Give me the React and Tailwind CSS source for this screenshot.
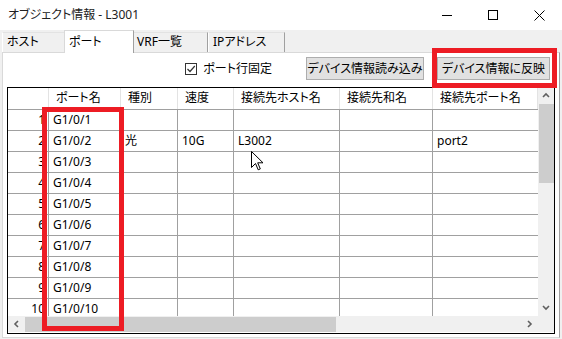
import React from "react";

const columns = [
  { key: "portName", label: "ポート名", w: "w-[72px]" },
  { key: "kind", label: "種別", w: "w-[57px]" },
  { key: "speed", label: "速度", w: "w-[56px]" },
  { key: "host", label: "接続先ホスト名", w: "w-[106px]" },
  { key: "alias", label: "接続先和名", w: "w-[93px]" },
  { key: "peerPort", label: "接続先ポート名", w: "flex-1" },
];

const rows = Array.from({ length: 10 }, (_, i) => ({
  no: i + 1,
  portName: `G1/0/${i + 1}`,
  kind: i === 1 ? "光" : "",
  speed: i === 1 ? "10G" : "",
  host: i === 1 ? "L3002" : "",
  alias: "",
  peerPort: i === 1 ? "port2" : "",
}));

const tabs = ["ホスト", "ポート", "VRF一覧", "IPアドレス"];

const WindowControls = () => (
  <div className="flex items-center h-full">
    <div className="w-[46px] h-full flex items-center justify-center">
      <div className="w-[10px] h-px bg-black" />
    </div>
    <div className="w-[46px] h-full flex items-center justify-center">
      <div className="w-[10px] h-[10px] border border-black" />
    </div>
    <div className="w-[46px] h-full flex items-center justify-center">
      <svg width="11" height="11" viewBox="0 0 11 11">
        <path d="M0.5 0.5 L10.5 10.5 M10.5 0.5 L0.5 10.5" stroke="#000" strokeWidth="1" />
      </svg>
    </div>
  </div>
);

const Chevron = ({ dir }) => {
  const paths = {
    up: "M1 5 L4 2 L7 5",
    down: "M1 2 L4 5 L7 2",
    left: "M5 1 L2 4 L5 7",
    right: "M2 1 L5 4 L2 7",
  };
  return (
    <svg width="8" height="8" viewBox="0 0 8 8">
      <path d={paths[dir]} fill="none" stroke="#606060" strokeWidth="1.6" />
    </svg>
  );
};

const Cursor = () => (
  <svg className="absolute left-[251px] top-[151px]" width="13" height="20" viewBox="0 0 13 20">
    <path
      d="M0.5 0.5 L0.5 16.5 L4.5 12.5 L7.2 18.8 L9.3 17.9 L6.7 11.8 L12 11.8 Z"
      fill="#fff"
      stroke="#000"
      strokeWidth="1"
      strokeLinejoin="round"
    />
  </svg>
);

export default function App() {
  return (
    <div className="relative w-[562px] h-[339px] overflow-hidden bg-[#f0f0f0] text-[12px] text-black font-['Noto_Sans','Noto_Sans_CJK_JP',sans-serif] [font-feature-settings:'palt']">
      {/* title bar */}
      <div className="h-[30px] bg-white flex items-center justify-between">
        <span className="pl-[8px] text-[12px] text-[#222]">オブジェクト情報 - L3001</span>
        <WindowControls />
      </div>

      {/* tabs */}
      <div className="h-[22px] flex items-end pl-[2px]">
        {tabs.map((t, i) =>
          i === 1 ? (
            <div
              key={t}
              className="relative z-10 h-[23px] -mb-px w-[70px] -mx-[2px] bg-white border border-b-0 border-[#d9d9d9] border-r-[#a0a0a0] px-[4px] pt-[2px] leading-[18px]"
            >
              {t}
            </div>
          ) : (
            <div
              key={t}
              className={
                "h-[20px] bg-[#f0f0f0] border border-b-0 border-t-[#e3e3e3] border-l-white border-r-[#a0a0a0] px-[4px] leading-[18px] " +
                (i === 0 ? "w-[64px]" : i === 2 ? "w-[76px]" : "w-[77px]")
              }
            >
              {t}
            </div>
          )
        )}
      </div>

      {/* tab panel */}
      <div className="ml-[2px] w-[558px] h-[286px] bg-white border border-[#d9d9d9] border-r-[#a0a0a0]">
        {/* toolbar */}
        <div className="h-[34px] flex items-start justify-end pr-[9px] pt-[4px]">
          <label className="flex items-center h-[23px] mr-[34px]">
            <span className="w-[12px] h-[12px] border border-[#333] flex items-center justify-center mr-[6px]">
              <svg width="10" height="10" viewBox="0 0 10 10">
                <path d="M1.5 5 L4 7.5 L8.8 2" fill="none" stroke="#333" strokeWidth="1.2" />
              </svg>
            </span>
            ポート行固定
          </label>
          <button className="w-[118px] h-[23px] bg-[#e1e1e1] border border-[#adadad] leading-none">
            デバイス情報読み込み
          </button>
          <button className="ml-[13px] w-[113px] h-[23px] bg-[#e1e1e1] border border-[#adadad] leading-none">
            デバイス情報に反映
          </button>
        </div>

        {/* grid */}
        <div className="ml-[4px] w-[548px] h-[247px] border border-black flex flex-col">
          <div className="flex h-[228px]">
            <div className="w-[530px] overflow-hidden">
              {/* header */}
              <div className="flex h-[22px] border-b border-[#a0a0a0]">
                <div className="w-[41px] border-r border-[#e3e3e3]" />
                {columns.map((c) => (
                  <div
                    key={c.key}
                    className={c.w + " shrink-0 border-r border-[#e3e3e3] pl-[7px] leading-[20px] whitespace-nowrap overflow-hidden"}
                  >
                    {c.label}
                  </div>
                ))}
              </div>
              {rows.map((r) => (
                <div key={r.no} className="flex h-[21px] border-b border-[#a0a0a0]">
                  <div className="w-[41px] border-r border-[#a0a0a0] text-right pr-[3px] leading-[20px]">
                    {r.no}
                  </div>
                  {columns.map((c, ci) => (
                    <div
                      key={c.key}
                      className={
                        c.w +
                        " shrink-0 pl-[4px] leading-[20px] whitespace-nowrap " +
                        (ci < columns.length - 1 ? "border-r border-[#a0a0a0]" : "")
                      }
                    >
                      {r[c.key]}
                    </div>
                  ))}
                </div>
              ))}
            </div>
            {/* vertical scrollbar */}
            <div className="w-[16px] bg-[#f0f0f0] flex flex-col">
              <div className="h-[16px] flex items-center justify-center">
                <Chevron dir="up" />
              </div>
              <div className="mx-auto w-[15px] h-[79px] bg-[#cdcdcd]" />
              <div className="flex-1" />
              <div className="h-[16px] flex items-center justify-center">
                <Chevron dir="down" />
              </div>
            </div>
          </div>
          {/* horizontal scrollbar */}
          <div className="flex h-[16px] bg-[#f0f0f0]">
            <div className="w-[530px] flex items-center">
              <div className="w-[17px] flex items-center justify-center">
                <Chevron dir="left" />
              </div>
              <div className="w-[311px] h-[15px] bg-[#cdcdcd]" />
              <div className="flex-1" />
              <div className="w-[17px] flex items-center justify-center">
                <Chevron dir="right" />
              </div>
            </div>
            <div className="w-[16px]" />
          </div>
        </div>
      </div>

      {/* annotation boxes */}
      <div className="absolute left-[432px] top-[48px] w-[125px] h-[40px] border-[5px] border-[#ed1c24]" />
      <div className="absolute left-[42px] top-[107px] w-[82px] h-[224px] border-[5px] border-[#ed1c24]" />
      <Cursor />
    </div>
  );
}
